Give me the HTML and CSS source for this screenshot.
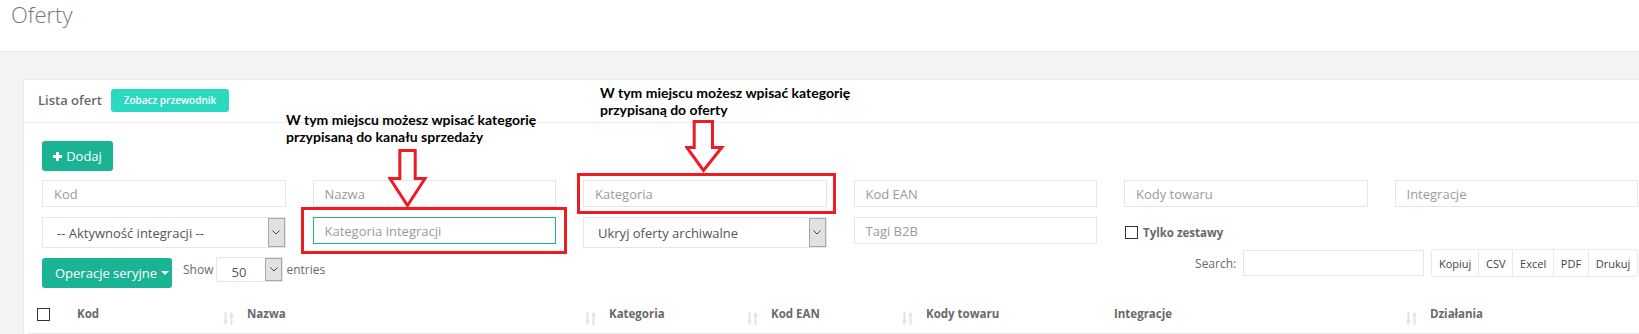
FILE: index.html
```html
<!DOCTYPE html>
<html lang="pl">
<head>
<meta charset="utf-8">
<title>Oferty</title>
<link rel="stylesheet" href="styles.css">
</head>
<body>
<header class="page-heading"><h2>Oferty</h2></header>
<main class="wrapper">
  <section class="card">
    <div class="card-title">
      <h5>Lista ofert</h5>
      <button class="btn-guide">Zobacz przewodnik</button>
    </div>
    <div class="card-body">
      <button class="btn btn-add"><svg class="plus" width="9" height="9" viewBox="0 0 9 9"><rect x="3" y="0" width="3" height="9" fill="#fff"/><rect x="0" y="3" width="9" height="3" fill="#fff"/></svg><span>Dodaj</span></button>
      <div class="filters">
        <div class="input">Kod</div>
        <div class="input">Nazwa</div>
        <div class="input">Kategoria</div>
        <div class="input">Kod EAN</div>
        <div class="input">Kody towaru</div>
        <div class="input">Integracje</div>
        <div class="select"><span>-- Aktywność integracji --</span><span class="select-arrow"><svg width="8" height="5" viewBox="0 0 8 5"><polyline points="0.5,0.5 4,4 7.5,0.5" fill="none" stroke="#444" stroke-width="1"/></svg></span></div>
        <div class="input focused">Kategoria integracji</div>
        <div class="select"><span>Ukryj oferty archiwalne</span><span class="select-arrow"><svg width="8" height="5" viewBox="0 0 8 5"><polyline points="0.5,0.5 4,4 7.5,0.5" fill="none" stroke="#444" stroke-width="1"/></svg></span></div>
        <div class="input">Tagi B2B</div>
        <label class="check"><span class="box"></span><span>Tylko zestawy</span></label>
        <div></div>
      </div>
      <div class="controls">
        <div class="controls-left">
          <button class="btn btn-bulk">Operacje seryjne <span class="caret"></span></button>
          <div class="length">
            <span>Show</span>
            <div class="select small"><span>50</span><span class="select-arrow"><svg width="8" height="5" viewBox="0 0 8 5"><polyline points="0.5,0.5 4,4 7.5,0.5" fill="none" stroke="#444" stroke-width="1"/></svg></span></div>
            <span>entries</span>
          </div>
        </div>
        <div class="controls-right">
          <span class="search-label">Search:</span>
          <div class="search-input"></div>
          <div class="btn-group">
            <button>Kopiuj</button><button>CSV</button><button>Excel</button><button>PDF</button><button>Drukuj</button>
          </div>
        </div>
      </div>
      <table class="grid">
        <colgroup>
          <col class="c0"><col class="c1"><col class="c2"><col class="c3"><col class="c4"><col class="c5"><col class="c6"><col class="c7">
        </colgroup>
        <thead>
          <tr>
            <th class="th-check"><span class="box"></span></th>
            <th><div class="th-in"><span>Kod</span><svg class="sort" width="11" height="13" viewBox="0 0 11 13"><path d="M1.5 0h2v8.5h1.5l-2.5 4.5l-2.5-4.5h1.5z" fill="#e3e3e3"/><path d="M8.5 0l2.5 4.5h-1.5v8.5h-2v-8.5h-1.5z" fill="#e3e3e3"/></svg></div></th>
            <th><div class="th-in"><span>Nazwa</span><svg class="sort" width="11" height="13" viewBox="0 0 11 13"><path d="M1.5 0h2v8.5h1.5l-2.5 4.5l-2.5-4.5h1.5z" fill="#e3e3e3"/><path d="M8.5 0l2.5 4.5h-1.5v8.5h-2v-8.5h-1.5z" fill="#e3e3e3"/></svg></div></th>
            <th><div class="th-in"><span>Kategoria</span><svg class="sort" width="11" height="13" viewBox="0 0 11 13"><path d="M1.5 0h2v8.5h1.5l-2.5 4.5l-2.5-4.5h1.5z" fill="#e3e3e3"/><path d="M8.5 0l2.5 4.5h-1.5v8.5h-2v-8.5h-1.5z" fill="#e3e3e3"/></svg></div></th>
            <th><div class="th-in"><span>Kod EAN</span><svg class="sort" width="11" height="13" viewBox="0 0 11 13"><path d="M1.5 0h2v8.5h1.5l-2.5 4.5l-2.5-4.5h1.5z" fill="#e3e3e3"/><path d="M8.5 0l2.5 4.5h-1.5v8.5h-2v-8.5h-1.5z" fill="#e3e3e3"/></svg></div></th>
            <th><div class="th-in"><span>Kody towaru</span></div></th>
            <th><div class="th-in"><span>Integracje</span><svg class="sort" width="11" height="13" viewBox="0 0 11 13"><path d="M1.5 0h2v8.5h1.5l-2.5 4.5l-2.5-4.5h1.5z" fill="#e3e3e3"/><path d="M8.5 0l2.5 4.5h-1.5v8.5h-2v-8.5h-1.5z" fill="#e3e3e3"/></svg></div></th>
            <th><div class="th-in"><span>Działania</span></div></th>
          </tr>
        </thead>
      </table>
    </div>
  </section>
</main>

<div class="annot annot-1">W tym miejscu możesz wpisać kategorię<br>przypisaną do kanału sprzedaży</div>
<div class="annot annot-2">W tym miejscu możesz wpisać kategorię<br>przypisaną do oferty</div>
<svg class="arrow arrow-1" width="40" height="60" viewBox="0 0 40 60"><polygon points="11.8,1.5 27.2,1.5 27.2,29.5 37,29.5 19.5,56.5 2,29.5 11.8,29.5" fill="none" stroke="#ed1c24" stroke-width="3"/></svg>
<svg class="arrow arrow-2" width="40" height="54" viewBox="0 0 40 54"><polygon points="9.2,1.5 27.5,1.5 27.5,27.5 36.8,27.5 18.5,50.5 1.8,27.5 9.2,27.5" fill="none" stroke="#ed1c24" stroke-width="3"/></svg>
<div class="red-box red-box-1"></div>
<div class="red-box red-box-2"></div>
</body>
</html>
```
FILE: styles.css
```css
* { box-sizing: border-box; }
html, body { margin: 0; padding: 0; }
body {
  width: 1639px;
  height: 334px;
  overflow: hidden;
  position: relative;
  font-family: "Open Sans", "Liberation Sans", sans-serif;
  font-size: 13px;
  color: #676a6c;
  background: #f3f3f4;
}
button { font-family: inherit; cursor: pointer; }

.page-heading {
  height: 52px;
  background: #fff;
  border-bottom: 1px solid #e7eaec;
  padding: 0 11px;
}
.page-heading h2 {
  margin: 0;
  font-size: 22px;
  font-weight: 300;
  line-height: 28px;
  color: #76797b;
}

.wrapper {
  height: 282px;
  overflow: hidden;
  padding: 27px 0 0 23px;
}

.card {
  width: 1634px;
  height: 255px;
  background: #fff;
  border: 1px solid #e7eaec;
  border-bottom: none;
  overflow: hidden;
}
.card-title {
  display: flex;
  align-items: center;
  gap: 9px;
  height: 43px;
  padding: 0 0 2px 14px;
  border-bottom: 1px solid #e7eaec;
}
.card-title h5 {
  margin: 0;
  font-size: 13px;
  font-weight: 600;
  color: #676a6c;
}
.btn-guide {
  width: 118px;
  height: 23px;
  padding: 0;
  border: none;
  border-radius: 3px;
  background: #2ad9bf;
  color: #fff;
  font-size: 10px;
  font-weight: 600;
}

.card-body { padding: 18px 18px 0; }

.btn {
  display: flex;
  align-items: center;
  border: none;
  border-radius: 3px;
  background: #1ab394;
  color: #fff;
  font-size: 13px;
}
.btn-add {
  width: 71px;
  height: 30px;
  padding: 0;
  justify-content: center;
  gap: 4px;
}

.filters {
  display: grid;
  grid-template-columns: repeat(6, 243.5px);
  column-gap: 27px;
  row-gap: 10px;
  align-items: start;
  margin-top: 9px;
}
.input {
  height: 27px;
  border: 1px solid #e5e6e7;
  background: #fff;
  padding: 0 11px;
  display: flex;
  align-items: center;
  color: #9b9b9b;
  font-size: 13px;
}
.input.focused { border-color: #1ab394; }

.select {
  height: 31px;
  border: 1px solid #e5e6e7;
  background: #fff;
  display: flex;
  align-items: center;
  justify-content: space-between;
  padding-left: 14px;
  color: #555;
  font-size: 13px;
}
.select-arrow {
  width: 17px;
  align-self: stretch;
  background: #e1e1e1;
  border: 1px solid #a8a8a8;
  display: flex;
  align-items: center;
  justify-content: center;
}
.select.small {
  width: 67px;
  height: 25px;
  margin: 0 3px;
}
.select.small span:first-child { padding-top: 4px; }

.check {
  align-self: center;
  display: flex;
  align-items: center;
  gap: 5px;
  margin-left: 1px;
  font-size: 11.5px;
  font-weight: 700;
  color: #676a6c;
}
.box {
  display: inline-block;
  width: 13px;
  height: 13px;
  border: 1px solid #333;
  background: #fff;
}

.controls {
  display: flex;
  justify-content: space-between;
  align-items: flex-start;
  margin-top: 1px;
}
.controls-left {
  display: flex;
  align-items: flex-start;
}
.btn-bulk {
  margin-top: 9px;
  width: 130px;
  height: 30px;
  padding: 0 0 0 13px;
}
.caret {
  display: inline-block;
  margin-left: 4px;
  border-top: 4px solid #fff;
  border-left: 4px solid transparent;
  border-right: 4px solid transparent;
}
.length {
  margin: 8px 0 0 11px;
  display: flex;
  align-items: center;
  font-size: 12px;
  color: #676a6c;
}
.controls-right {
  display: flex;
  align-items: center;
  gap: 7px;
}
.search-label { font-size: 12px; color: #676a6c; }
.search-input {
  width: 181px;
  height: 26px;
  border: 1px solid #e5e6e7;
  background: #fff;
}
.btn-group { display: flex; }
.btn-group button {
  height: 28px;
  padding: 0 6.8px;
  margin-left: -1px;
  border: 1px solid #e7eaec;
  background: #fff;
  color: #444;
  font-size: 11px;
}
.btn-group button:first-child { border-radius: 3px 0 0 3px; margin-left: 0; }
.btn-group button:last-child { border-radius: 0 3px 3px 0; }

.grid {
  margin: 6px -14px 0;
  width: calc(100% + 28px);
  border-collapse: collapse;
  table-layout: fixed;
}
.c0 { width: 38px; }
.c1 { width: 170px; }
.c2 { width: 362px; }
.c3 { width: 162px; }
.c4 { width: 155px; }
.c5 { width: 188px; }
.c6 { width: 316px; }
.grid th {
  height: 40px;
  padding: 0 2px 0 11px;
  border-bottom: 2px solid #e7eaec;
  text-align: left;
  font-size: 11.5px;
  font-weight: 700;
  color: #676a6c;
}
.grid th.th-check { padding-left: 9px; }
.grid th.th-check .box { vertical-align: middle; }
.th-in {
  display: flex;
  justify-content: space-between;
  align-items: center;
  height: 38px;
}
.sort { align-self: flex-end; margin-bottom: 8px; }

/* screenshot annotations lying over the page */
.annot {
  position: absolute;
  font-family: "Lato", "Open Sans", sans-serif;
  font-weight: 700;
  font-size: 14px;
  line-height: 17px;
  color: #000;
  white-space: nowrap;
}
.annot-1 { left: 286px; top: 111px; }
.annot-2 { left: 600px; top: 84px; }
.arrow { position: absolute; }
.arrow-1 { left: 388px; top: 149px; }
.arrow-2 { left: 685px; top: 120px; }
.red-box {
  position: absolute;
  border: 3px solid #ed1c24;
}
.red-box-1 { left: 301px; top: 207px; width: 266px; height: 47px; }
.red-box-2 { left: 577px; top: 173px; width: 259px; height: 41px; }
```
